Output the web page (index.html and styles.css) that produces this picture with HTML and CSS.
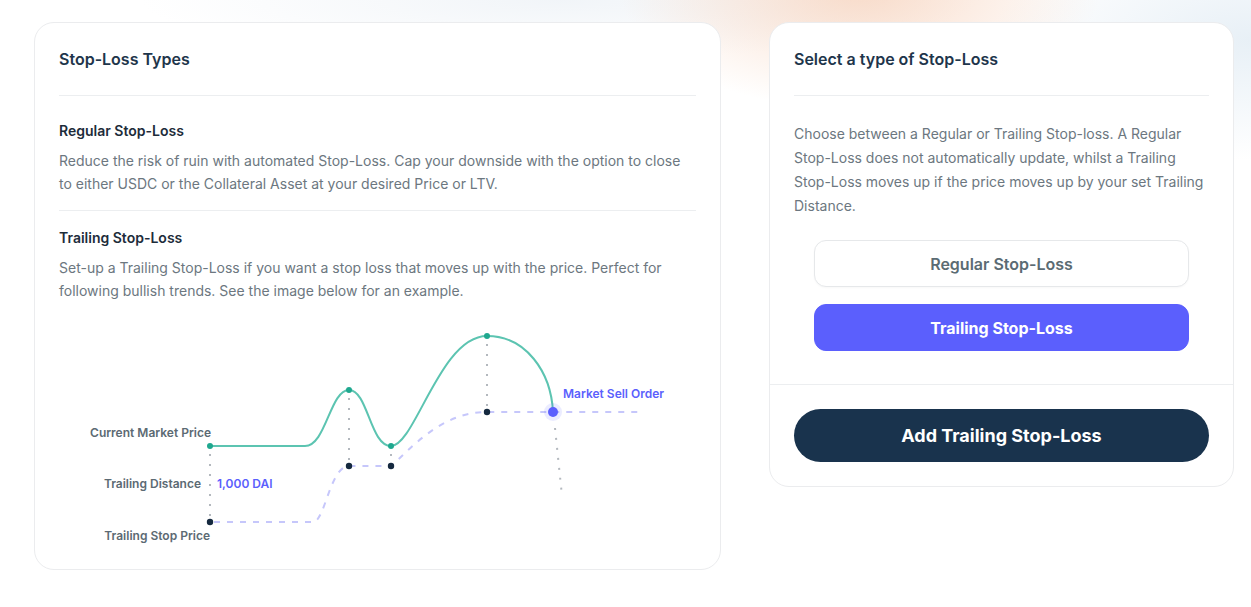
FILE: index.html
```html
<!DOCTYPE html>
<html lang="en">
<head>
<meta charset="utf-8">
<title>Stop-Loss</title>
<link rel="stylesheet" href="styles.css">
</head>
<body>
<div class="page">
  <section class="card card-info">
    <div class="card-head"><h2 class="card-title">Stop-Loss Types</h2></div>
    <div class="info-block first">
      <h3 class="block-title">Regular Stop-Loss</h3>
      <p class="text">Reduce the risk of ruin with automated Stop-Loss. Cap your downside with the option to close to either USDC or the Collateral Asset at your desired Price or LTV.</p>
    </div>
    <div class="info-block last">
      <h3 class="block-title">Trailing Stop-Loss</h3>
      <p class="text">Set-up a Trailing Stop-Loss if you want a stop loss that moves up with the price. Perfect for following bullish trends. See the image below for an example.</p>
    </div>
    <svg class="chart" viewBox="59 302 637 267" width="637" height="267" xmlns="http://www.w3.org/2000/svg">
      <g class="dotted">
        <path d="M210 454 L210 518"/>
        <path d="M349 398 L349 462"/>
        <path d="M391 454 L391 462"/>
        <path d="M487 344 L487 408"/>
        <path d="M555 428 L562 496"/>
      </g>
      <path class="dashed" d="M214 522 L313 522 C 325 522 330 466 349 466 L391 466 C 410 450 440 412 487 412 L642 412"/>
      <path class="price" d="M210 446 L305 446 C 326 446 330 390 349 390 C 368 390 370 446 391 446 C 415 446 440 336 487 336 C 526 336 551 372 553 412"/>
      <circle class="dot-green" cx="210" cy="446" r="3"/>
      <circle class="dot-green" cx="349" cy="390" r="3"/>
      <circle class="dot-green" cx="391" cy="446" r="3"/>
      <circle class="dot-green" cx="487" cy="336" r="3"/>
      <circle class="dot-dark" cx="210" cy="522" r="3.2"/>
      <circle class="dot-dark" cx="349" cy="466" r="3.2"/>
      <circle class="dot-dark" cx="391" cy="466" r="3.2"/>
      <circle class="dot-dark" cx="487" cy="412" r="3.2"/>
      <circle class="halo" cx="553" cy="412" r="9"/>
      <circle class="dot-sell" cx="553" cy="412" r="5"/>
      <text class="lbl" x="211" y="437" text-anchor="end">Current Market Price</text>
      <text class="lbl" x="201" y="488" text-anchor="end">Trailing Distance</text>
      <text class="lbl accent" x="217" y="488">1,000 DAI</text>
      <text class="lbl" x="210" y="540" text-anchor="end">Trailing Stop Price</text>
      <text class="lbl accent" x="563" y="398">Market Sell Order</text>
    </svg>
  </section>

  <section class="card card-select">
    <div class="select-body">
      <div class="card-head"><h2 class="card-title">Select a type of Stop-Loss</h2></div>
      <p class="text desc">Choose between a Regular or Trailing Stop-loss. A Regular Stop-Loss does not automatically update, whilst a Trailing Stop-Loss moves up if the price moves up by your set Trailing Distance.</p>
      <div class="options">
        <button class="opt">Regular Stop-Loss</button>
        <button class="opt active">Trailing Stop-Loss</button>
      </div>
    </div>
    <div class="select-foot">
      <button class="cta">Add Trailing Stop-Loss</button>
    </div>
  </section>
</div>
</body>
</html>
```

FILE: styles.css
```css
* { box-sizing: border-box; }

html, body { margin: 0; padding: 0; }

body {
  width: 1251px;
  height: 607px;
  overflow: hidden;
  font-family: Inter, "Noto Sans", sans-serif;
  background-color: #ffffff;
  background-image:
    radial-gradient(ellipse 240px 120px at 860px -10px, rgba(247, 208, 184, 0.75), rgba(247, 208, 184, 0) 100%),
    radial-gradient(ellipse 260px 120px at 1251px 40px, rgba(226, 236, 244, 0.8), rgba(226, 236, 244, 0) 100%),
    radial-gradient(ellipse 420px 60px at 560px 0px, rgba(232, 238, 244, 0.6), rgba(232, 238, 244, 0) 100%);
}

.page {
  display: flex;
  align-items: flex-start;
  gap: 48px;
  padding: 22px 17px 0 34px;
}

.card {
  background: #ffffff;
  border: 1px solid #ebecee;
  border-radius: 20px;
}

.card-info {
  flex: 0 0 687px;
  padding: 0 24px;
}

.card-select {
  flex: 1 1 auto;
}

.card-head {
  padding: 24px 0;
  border-bottom: 1px solid #eceef0;
}

.card-title {
  margin: 0;
  font-size: 16px;
  line-height: 24px;
  font-weight: 600;
  color: #1e354b;
}

.info-block {
  padding: 16px 0;
}
.info-block.first {
  padding-top: 24px;
  padding-bottom: 15px;
  border-bottom: 1px solid #eceef0;
}
.info-block.last {
  padding-bottom: 0;
}

.block-title {
  margin: 0 0 7px;
  font-size: 14px;
  line-height: 22px;
  font-weight: 600;
  color: #1d2c3a;
}

.text {
  margin: 0;
  font-size: 14px;
  line-height: 23px;
  color: #6c7780;
}

.chart {
  display: block;
}

.chart .dotted path {
  fill: none;
  stroke: #b3b8be;
  stroke-width: 2;
  stroke-dasharray: 2 8;
}

.chart .dashed {
  fill: none;
  stroke: #c6c7fb;
  stroke-width: 2;
  stroke-dasharray: 6 7;
}

.chart .price {
  fill: none;
  stroke: #5cc4b1;
  stroke-width: 2;
}

.chart .dot-green { fill: #1fa88f; }
.chart .dot-dark { fill: #15293f; }
.chart .halo { fill: #5b5ffd; fill-opacity: 0.12; }
.chart .dot-sell { fill: #5b5ffd; }

.chart .lbl {
  font-family: Inter, "Noto Sans", sans-serif;
  font-size: 12px;
  font-weight: 600;
  fill: #5c6a73;
}
.chart .lbl.accent { fill: #5b5ffd; }

.select-body {
  padding: 0 24px 33px;
}

.desc {
  padding-top: 26px;
  line-height: 24px;
}

.options {
  display: flex;
  flex-direction: column;
  gap: 17px;
  margin: 22px 20px 0;
}

.opt {
  height: 47px;
  border-radius: 12px;
  border: 1px solid #e6e8ea;
  background: #ffffff;
  font-family: Inter, "Noto Sans", sans-serif;
  font-size: 16px;
  font-weight: 600;
  color: #5b6b73;
  cursor: pointer;
  box-shadow: 0 1px 2px rgba(0, 0, 0, 0.03);
}

.opt.active {
  background: #5b5ffd;
  border-color: #5b5ffd;
  color: #ffffff;
  font-weight: 700;
  box-shadow: none;
}

.select-foot {
  border-top: 1px solid #eceef0;
  padding: 24px;
}

.cta {
  display: block;
  width: 100%;
  height: 53px;
  border: none;
  border-radius: 27px;
  background: #19334d;
  color: #ffffff;
  font-family: Inter, "Noto Sans", sans-serif;
  font-size: 18px;
  font-weight: 700;
  cursor: pointer;
}
```
